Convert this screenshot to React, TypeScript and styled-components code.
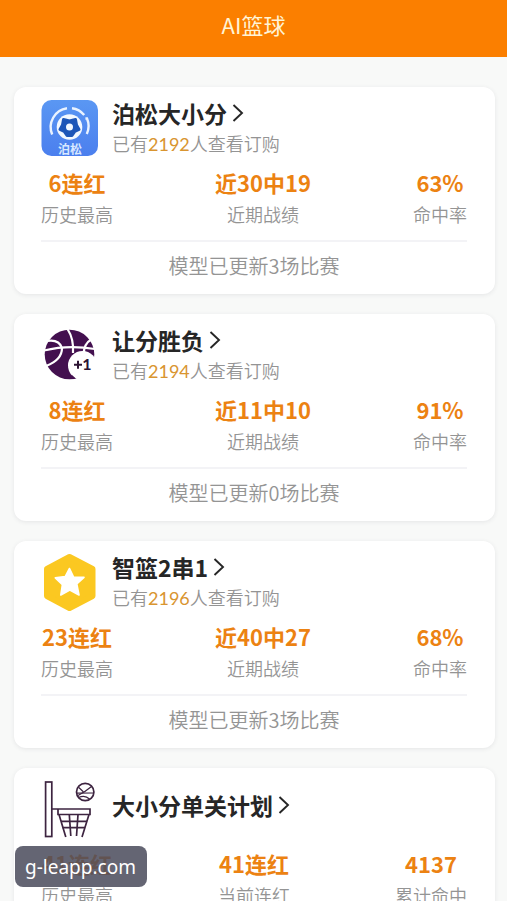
import React from "react";
import styled, { createGlobalStyle } from "styled-components";

const GlobalStyle = createGlobalStyle`
  * { box-sizing: border-box; }
  body {
    margin: 0;
    background: #f8f9f8;
    font-family: "Noto Sans CJK SC", sans-serif;
  }
`;

const Screen = styled.div`
  position: relative;
  display: flex;
  flex-direction: column;
  height: 100vh;
  overflow: hidden;
`;

const TopBar = styled.header`
  flex: none;
  display: flex;
  align-items: center;
  justify-content: center;
  padding: 8px 16px 17px;
  background: #fb7f00;
`;

const PageTitle = styled.h1`
  margin: 0;
  font-size: 22px;
  line-height: 32px;
  font-weight: 400;
  color: #fff4d6;
`;

const List = styled.main`
  flex: 1;
  display: flex;
  flex-direction: column;
  gap: 20px;
  padding: 30px 12px 20px 14px;
  overflow-y: auto;
  scrollbar-width: none;
`;

const Card = styled.article`
  flex: none;
  padding: 12px 28px 0 27px;
  border-radius: 12px;
  background: #fff;
  box-shadow: 0 1px 4px rgba(60, 60, 80, 0.1);
`;

const CardHead = styled.div`
  display: flex;
  align-items: center;
  gap: 14px;
  height: 58px;
`;

const IconBox = styled.svg`
  flex: none;
  width: 57px;
  height: 58px;
`;

const Heading = styled.div<{ $single: boolean }>`
  display: flex;
  flex-direction: column;
  gap: 4px;
  padding-bottom: ${(p) => (p.$single ? 8 : 2)}px;
`;

const TitleLink = styled.a`
  display: flex;
  align-items: center;
  gap: 5px;
  color: #262626;
  text-decoration: none;
`;

const Title = styled.h2`
  margin: 0;
  font-size: 23px;
  line-height: 28px;
  font-weight: 700;
`;

const Chevron = styled.svg`
  width: 12px;
  height: 20px;
`;

const Subtitle = styled.p`
  margin: 0;
  font-size: 18px;
  line-height: 24px;
  font-weight: 350;
  color: #949494;
`;

const Count = styled.span`
  font-family: Lato, "Noto Sans CJK SC", sans-serif;
  font-weight: 400;
  color: #d99530;
`;

const Stats = styled.dl`
  display: flex;
  justify-content: space-between;
  margin: 0;
  padding: 10px 0 13px;
`;

const Stat = styled.div`
  display: flex;
  flex-direction: column-reverse;
  align-items: center;
  gap: 4px;
`;

const StatLabel = styled.dt`
  font-size: 18px;
  line-height: 26px;
  font-weight: 350;
  color: #949494;
`;

const StatValue = styled.dd`
  margin: 0;
  font-size: 22px;
  line-height: 30px;
  font-weight: 700;
  color: #ec8212;
`;

const Update = styled.p`
  margin: 0;
  padding: 9px 0 13px;
  border-top: 2px solid #f3f3f6;
  font-size: 20px;
  line-height: 30px;
  font-weight: 350;
  text-align: center;
  color: #949494;
`;

const SiteTag = styled.div`
  position: absolute;
  left: 15px;
  bottom: 14px;
  padding: 7px 11px 6px 10px;
  border-radius: 8px;
  background: rgba(74, 76, 92, 0.86);
  font-family: "Noto Sans", sans-serif;
  font-size: 19px;
  line-height: 28px;
  color: #fff;
`;

const SoccerIcon = () => (
  <IconBox viewBox="0 0 57 58" aria-hidden="true">
    <defs>
      <linearGradient id="sky" x1="0" y1="0" x2="0" y2="1">
        <stop offset="0" stopColor="#5a97f3" />
        <stop offset="1" stopColor="#4b7fee" />
      </linearGradient>
    </defs>
    <rect x="0.5" y="1" width="56.5" height="56" rx="10" fill="url(#sky)" />
    <g fill="none" stroke="#eaf3ff" strokeWidth="2.4">
      <path d="M11.2 35.5A19 19 0 0 1 26 9.3" />
      <path d="M31 9.2A19 19 0 0 1 43.2 16" />
      <path d="M44.4 19.5H46A19 19 0 0 1 45.8 35" />
    </g>
    <circle cx="28.5" cy="28" r="12.8" fill="#f2f8ff" />
    <path
      d="M22.5 20.5L28.5 22L34.5 20.5L35.5 26L38 30.5L33.8 32.5L31 36.5H26L23.2 32.5L19 30.5L21.5 26Z"
      fill="#1d56b8"
      stroke="#1d56b8"
      strokeWidth="3"
      strokeLinejoin="round"
    />
    <circle cx="28.5" cy="28" r="3.5" fill="#f2f8ff" />
    <text x="29" y="54.5" fontSize="12" fontWeight="700" textAnchor="middle" fill="#d8e8ff">
      泊松
    </text>
  </IconBox>
);

const PlusOneIcon = () => (
  <IconBox viewBox="0 0 57 58" aria-hidden="true">
    <circle cx="28.5" cy="28.5" r="24.8" fill="#43104f" />
    <g fill="none" stroke="#fff" strokeWidth="2.2">
      <path d="M3 24.5Q27 18.5 54 23" />
      <path d="M26.5 3Q33 13 32 27" />
      <path d="M6 15Q18 13 21 22Q21 34 5 40" />
      <path d="M51 13Q42 18 43 29" />
    </g>
    <circle cx="41.5" cy="39.5" r="14.5" fill="#fff" />
    <path d="M29.5 52L31 49L34.5 52.5Z" fill="#43104f" />
    <path d="M33 38.8H41M37 34.8V42.8" stroke="#2c1433" strokeWidth="2" />
    <text
      x="46"
      y="44"
      fontSize="16"
      fontFamily="Lato, sans-serif"
      fontWeight="700"
      textAnchor="middle"
      fill="#2c1433"
    >
      1
    </text>
  </IconBox>
);

const StarIcon = () => (
  <IconBox viewBox="0 0 57 58" aria-hidden="true">
    <path
      d="M28.5 4L51.5 16V43L28.5 55L6 43V16Z"
      fill="#fbc821"
      stroke="#fbc821"
      strokeWidth="6"
      strokeLinejoin="round"
    />
    <path
      d="M28.5 15.5L32.6 24L43 24.4L35.8 31L38 42L28.8 37L19.8 42L21.4 31.6L14.3 24.8L24.2 23.6Z"
      fill="#fff"
      stroke="#fff"
      strokeWidth="1.6"
      strokeLinejoin="round"
    />
  </IconBox>
);

const HoopIcon = () => (
  <IconBox viewBox="0 0 57 58" aria-hidden="true">
    <g fill="none" stroke="#3d2440" strokeWidth="1.7">
      <rect x="4.6" y="2" width="6.2" height="54.5" />
      <path d="M11 29H49V34.5H17V29" />
      <path d="M18 34.5L24.8 57M48 34.5L41 57M28.3 34.5L29.8 56M37 34.5L35.5 56" />
      <path d="M20 41.4H46M21.6 47.6H44" />
      <circle cx="44.2" cy="12" r="8.7" />
      <g strokeWidth="1.2">
        <path d="M35.6 13.2L52.6 13" />
        <path d="M37 15.5Q44 12 50.5 6.5" />
        <path d="M37.8 7.5Q40 9.5 42.5 12" />
        <path d="M37.5 17.5Q44 14.5 48.5 19" />
      </g>
    </g>
  </IconBox>
);

type Model = {
  title: string;
  icon: React.ReactNode;
  buyers?: string;
  stats: [string, string][];
  update?: string;
};

const models: Model[] = [
  {
    title: "泊松大小分",
    icon: <SoccerIcon />,
    buyers: "2192",
    stats: [["6连红", "历史最高"], ["近30中19", "近期战绩"], ["63%", "命中率"]],
    update: "模型已更新3场比赛",
  },
  {
    title: "让分胜负",
    icon: <PlusOneIcon />,
    buyers: "2194",
    stats: [["8连红", "历史最高"], ["近11中10", "近期战绩"], ["91%", "命中率"]],
    update: "模型已更新0场比赛",
  },
  {
    title: "智篮2串1",
    icon: <StarIcon />,
    buyers: "2196",
    stats: [["23连红", "历史最高"], ["近40中27", "近期战绩"], ["68%", "命中率"]],
    update: "模型已更新3场比赛",
  },
  {
    title: "大小分单关计划",
    icon: <HoopIcon />,
    stats: [["41连红", "历史最高"], ["41连红", "当前连红"], ["4137", "累计命中"]],
  },
];

const ModelCard = ({ model }: { model: Model }) => (
  <Card>
    <CardHead>
      {model.icon}
      <Heading $single={!model.buyers}>
        <TitleLink href="#">
          <Title>{model.title}</Title>
          <Chevron viewBox="0 0 12 20" aria-hidden="true">
            <path d="M1.5 2L10 10L1.5 18" fill="none" stroke="currentColor" strokeWidth="1.9" />
          </Chevron>
        </TitleLink>
        {model.buyers && (
          <Subtitle>
            已有<Count>{model.buyers}</Count>人查看订购
          </Subtitle>
        )}
      </Heading>
    </CardHead>
    <Stats>
      {model.stats.map(([value, label]) => (
        <Stat key={label}>
          <StatLabel>{label}</StatLabel>
          <StatValue>{value}</StatValue>
        </Stat>
      ))}
    </Stats>
    {model.update && <Update>{model.update}</Update>}
  </Card>
);

export default function App() {
  return (
    <Screen>
      <GlobalStyle />
      <TopBar>
        <PageTitle>AI篮球</PageTitle>
      </TopBar>
      <List>
        {models.map((model) => (
          <ModelCard key={model.title} model={model} />
        ))}
      </List>
      <SiteTag>g-leapp.com</SiteTag>
    </Screen>
  );
}
